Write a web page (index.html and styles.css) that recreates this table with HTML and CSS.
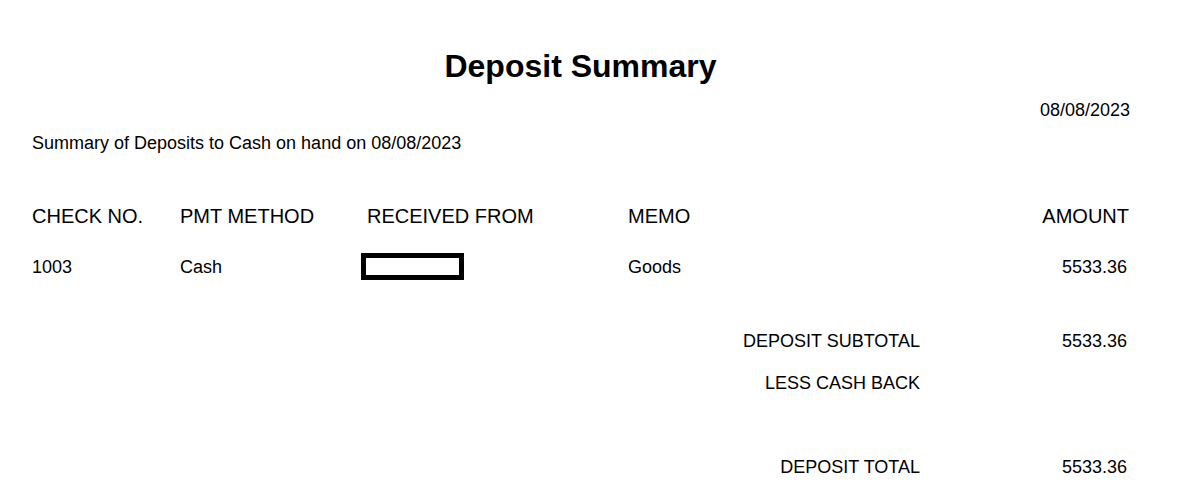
FILE: index.html
```html
<!DOCTYPE html>
<html lang="en">
<head>
<meta charset="utf-8">
<title>Deposit Summary</title>
<link rel="stylesheet" href="styles.css">
</head>
<body>
<main class="report">
  <h1 class="title">Deposit Summary</h1>
  <div class="report-date">08/08/2023</div>
  <p class="summary">Summary of Deposits to Cash on hand on 08/08/2023</p>

  <div class="table-head">
    <div>CHECK NO.</div>
    <div>PMT METHOD</div>
    <div>RECEIVED FROM</div>
    <div>MEMO</div>
    <div class="amount">AMOUNT</div>
  </div>

  <div class="table-row">
    <div>1003</div>
    <div>Cash</div>
    <div><span class="redacted"></span></div>
    <div>Goods</div>
    <div class="amount num">5533.36</div>
  </div>

  <div class="totals">
    <div class="label">DEPOSIT SUBTOTAL</div>
    <div class="num">5533.36</div>
    <div class="label">LESS CASH BACK</div>
    <div class="num"></div>
    <div class="label"></div>
    <div class="num"></div>
    <div class="label">DEPOSIT TOTAL</div>
    <div class="num">5533.36</div>
  </div>
</main>
</body>
</html>
```

FILE: styles.css
```css
* { box-sizing: border-box; }

html, body {
  margin: 0;
  padding: 0;
  background: #ffffff;
}

body {
  font-family: "Liberation Sans", Arial, sans-serif;
  color: #000000;
  font-size: 18px;
  line-height: 22px;
}

.report {
  padding: 48px 58px 0 32px;
}

.title {
  margin: 0;
  font-size: 32px;
  line-height: 36px;
  font-weight: bold;
  text-align: center;
}

.report-date {
  margin-top: 15px;
  margin-right: -1px;
  text-align: right;
}

.summary {
  margin: 11px 0 0;
}

.table-head,
.table-row {
  display: grid;
  grid-template-columns: 148px 187px 261px 1fr auto;
  align-items: center;
}

.table-head {
  margin-top: 50px;
  font-size: 20px;
  line-height: 24px;
}

.table-row {
  margin-top: 25px;
  min-height: 27px;
}

.amount { text-align: right; }

.redacted {
  display: block;
  width: 103px;
  height: 27px;
  margin-left: -6px;
  border: 5px solid #000000;
}

.totals {
  margin-top: 50px;
  display: grid;
  grid-template-columns: 1fr 209px;
  grid-auto-rows: 22px;
  row-gap: 20px;
}

.totals .label { text-align: right; }

.num {
  text-align: right;
  padding-right: 2px;
}
```
